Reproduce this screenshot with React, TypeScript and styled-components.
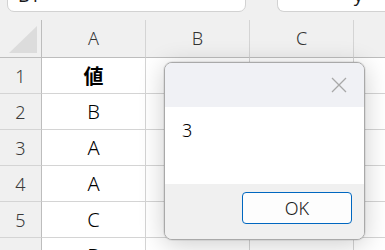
import { FC, Fragment } from 'react';
import styled, { createGlobalStyle } from 'styled-components';

const headerBg = '#f0f0f0';
const gridLine = '#d4d4d4';
const textDark = '#1a1a1a';

const GlobalStyle = createGlobalStyle`
	html, body {
		margin: 0;
		padding: 0;
		background: ${headerBg};
		overflow: hidden;
	}
	#root {
		width: 385px;
		height: 250px;
		overflow: hidden;
		position: relative;
		font-family: 'Noto Sans', 'Noto Sans CJK JP', sans-serif;
	}
`;

const Toolbar = styled.div`
	display: flex;
	height: 20px;
	background: ${headerBg};
	overflow: hidden;
`;

const NameBox = styled.div`
	box-sizing: border-box;
	margin: -20px 0 0 7px;
	width: 239px;
	height: 32px;
	padding: 5px 0 0 10px;
	background: #fff;
	border: 1px solid #d2d2d2;
	border-radius: 0 0 7px 7px;
	font-size: 18px;
	line-height: 18px;
	color: ${textDark};
`;

const FormulaBox = styled.div`
	box-sizing: border-box;
	margin: -20px 0 0 31px;
	flex: 1;
	height: 32px;
	padding: 5px 22px 0 0;
	text-align: right;
	background: #fff;
	border: 1px solid #d2d2d2;
	border-right: none;
	border-radius: 0 0 0 7px;
	font-size: 18px;
	line-height: 18px;
	color: ${textDark};
`;

const Grid = styled.div`
	display: grid;
	grid-template-columns: 42px repeat(4, 104px);
	grid-template-rows: 38px repeat(6, 36px);
	background: #fff;
`;

const Corner = styled.div`
	box-sizing: border-box;
	display: flex;
	align-items: flex-end;
	justify-content: flex-end;
	padding: 0 4px 4px 0;
	background: ${headerBg};
	border-right: 1px solid #bdbdbd;
	border-bottom: 1px solid #bdbdbd;
`;

const CornerTriangle = styled.div`
	width: 28px;
	height: 27px;
	background: #dcdcdc;
	clip-path: polygon(100% 0, 100% 100%, 0 100%);
`;

const ColHeader = styled.div`
	box-sizing: border-box;
	display: flex;
	align-items: center;
	justify-content: center;
	background: ${headerBg};
	border-right: 1px solid ${gridLine};
	border-bottom: 1px solid #bdbdbd;
	font-size: 18px;
	font-weight: 300;
	color: #333;
	padding-bottom: 2px;
`;

const RowHeader = styled.div`
	box-sizing: border-box;
	display: flex;
	align-items: center;
	justify-content: center;
	background: ${headerBg};
	border-right: 1px solid #bdbdbd;
	border-bottom: 1px solid ${gridLine};
	font-size: 18px;
	font-weight: 300;
	color: #3a3a3a;
`;

const Cell = styled.div<{ $bold?: boolean }>`
	box-sizing: border-box;
	display: flex;
	align-items: center;
	justify-content: center;
	border-right: 1px solid ${gridLine};
	border-bottom: 1px solid ${gridLine};
	font-size: 20px;
	font-weight: ${(p) => (p.$bold ? 700 : 300)};
	color: #000;
`;

const Dialog = styled.div`
	position: absolute;
	left: 164px;
	top: 62px;
	width: 201px;
	height: 178px;
	box-sizing: border-box;
	display: flex;
	flex-direction: column;
	border: 1px solid #a9a9a9;
	border-radius: 8px;
	overflow: hidden;
	background: #f0f0f0;
	box-shadow: 0 0 0 1px rgba(0, 0, 0, 0.06), 0 4px 26px rgba(0, 0, 0, 0.2);
`;

const TitleBar = styled.div`
	height: 44px;
	display: flex;
	justify-content: flex-end;
	align-items: center;
	padding-right: 17px;
	background: #f0f1f5;
`;

const Content = styled.div`
	height: 77px;
	background: #fff;
	padding: 11px 0 0 17px;
	box-sizing: border-box;
	font-size: 18px;
	font-weight: 300;
	line-height: 24px;
	color: #000;
`;

const Footer = styled.div`
	flex: 1;
	display: flex;
	justify-content: flex-end;
	align-items: flex-start;
	padding: 8px 12px 0 0;
	background: #f0f0f0;
`;

const OkButton = styled.button`
	width: 110px;
	height: 32px;
	box-sizing: border-box;
	border: 1px solid #0067c0;
	border-radius: 4px;
	background: #fdfdfd;
	font-family: 'Noto Sans', sans-serif;
	font-size: 18px;
	font-weight: 300;
	color: ${textDark};
	padding: 0;
`;

const CloseIcon: FC = () => (
	<svg width="16" height="16" viewBox="0 0 16 16">
		<path d="M1 1 L15 15 M15 1 L1 15" stroke="#a8a8a8" strokeWidth="1.3" fill="none" />
	</svg>
);

const columns = ['A', 'B', 'C', ''];
const rows: [string, string, boolean?][] = [
	['1', '値', true],
	['2', 'B'],
	['3', 'A'],
	['4', 'A'],
	['5', 'C'],
	['6', 'B'],
];

const App: FC = () => (
	<>
		<GlobalStyle />
		<Toolbar>
			<NameBox>B1</NameBox>
			<FormulaBox>y</FormulaBox>
		</Toolbar>
		<Grid>
			<Corner>
				<CornerTriangle />
			</Corner>
			{columns.map((c, i) => (
				<ColHeader key={i}>{c}</ColHeader>
			))}
			{rows.map(([n, v, bold]) => (
				<Fragment key={n}>
					<RowHeader>{n}</RowHeader>
					<Cell $bold={bold}>{v}</Cell>
					<Cell />
					<Cell />
					<Cell />
				</Fragment>
			))}
		</Grid>
		<Dialog>
			<TitleBar>
				<CloseIcon />
			</TitleBar>
			<Content>3</Content>
			<Footer>
				<OkButton>OK</OkButton>
			</Footer>
		</Dialog>
	</>
);

export default App;
